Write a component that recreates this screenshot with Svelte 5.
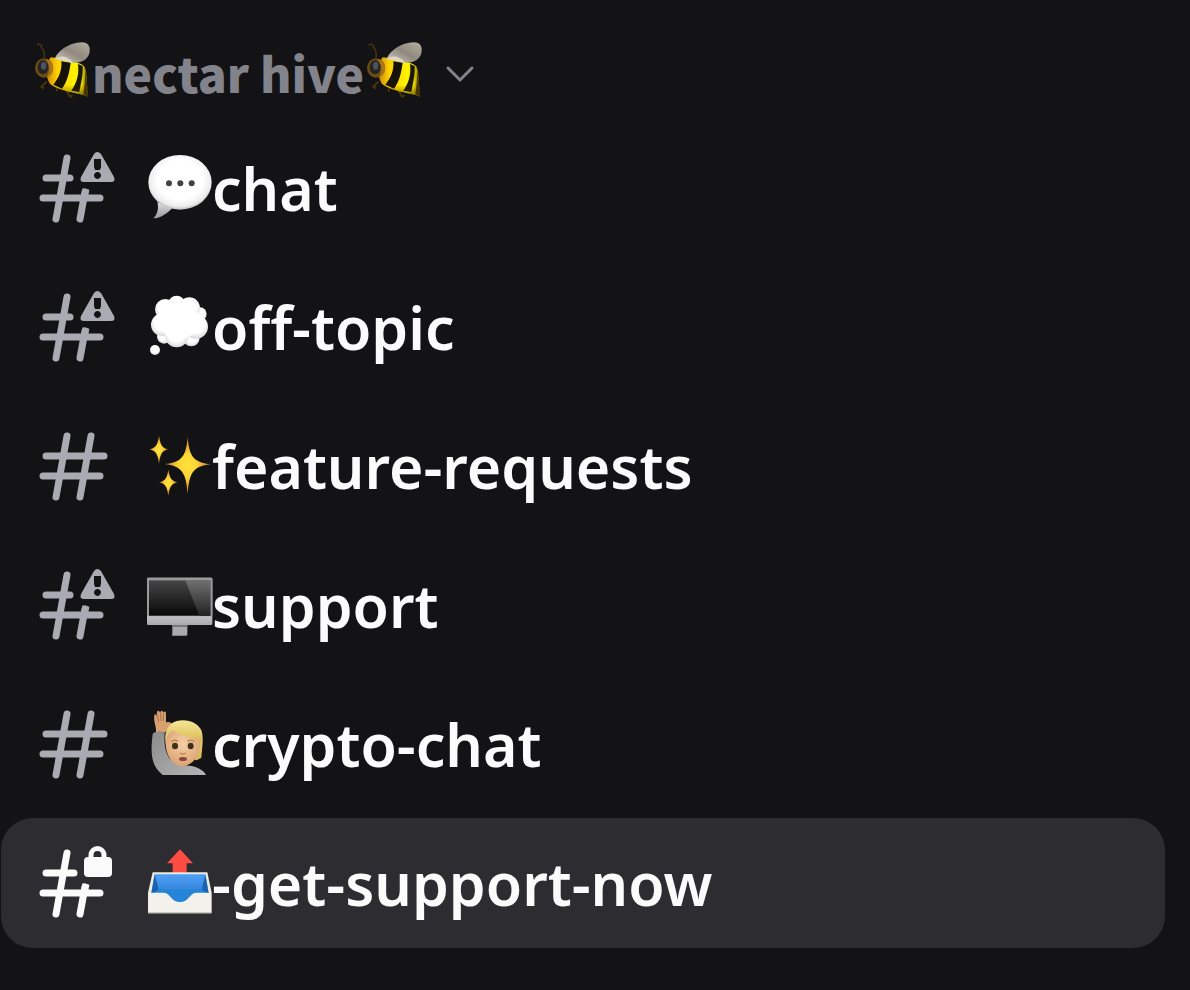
<script>
  let open = true;
  let selected = "-get-support-now";

  const channels = [
    { name: "chat", emoji: "speech", badge: "warning" },
    { name: "off-topic", emoji: "thought", badge: "warning" },
    { name: "feature-requests", emoji: "sparkles", badge: "" },
    { name: "support", emoji: "desktop", badge: "warning" },
    { name: "crypto-chat", emoji: "person", badge: "" },
    { name: "-get-support-now", emoji: "outbox", badge: "lock" },
  ];
</script>

<!-- gradients shared by the emoji -->
<svg class="defs" aria-hidden="true">
  <defs>
    <linearGradient id="wing" x1="0" y1="1" x2="1" y2="0">
      <stop offset="0" stop-color="#d6d0c4" />
      <stop offset="0.5" stop-color="#8f897f" />
      <stop offset="1" stop-color="#b5afa0" />
    </linearGradient>
    <linearGradient id="beeBody" x1="0" y1="0" x2="1" y2="0">
      <stop offset="0" stop-color="#c88a08" />
      <stop offset="0.25" stop-color="#ffd000" />
      <stop offset="0.7" stop-color="#fff400" />
      <stop offset="0.85" stop-color="#e8d800" />
      <stop offset="1" stop-color="#7a6500" />
    </linearGradient>
    <linearGradient id="beeShade" x1="0" y1="0" x2="0" y2="1">
      <stop offset="0.7" stop-color="#3a2600" stop-opacity="0" />
      <stop offset="1" stop-color="#3a2600" stop-opacity="0.6" />
    </linearGradient>
    <radialGradient id="bubble" cx="0.5" cy="0.45" r="0.56">
      <stop offset="0.65" stop-color="#fff" />
      <stop offset="0.88" stop-color="#ececec" />
      <stop offset="1" stop-color="#b5b5b5" />
    </radialGradient>
    <linearGradient id="tail" x1="0" y1="0" x2="0" y2="1">
      <stop offset="0" stop-color="#ddd" />
      <stop offset="1" stop-color="#999" />
    </linearGradient>
    <radialGradient id="puff" cx="0.5" cy="0.4" r="0.6">
      <stop offset="0.6" stop-color="#fff" />
      <stop offset="1" stop-color="#d8d8d8" />
    </radialGradient>
    <radialGradient id="star">
      <stop offset="0" stop-color="#ffe33d" />
      <stop offset="0.4" stop-color="#fcd535" />
      <stop offset="1" stop-color="#c97a2b" />
    </radialGradient>
    <linearGradient id="screen" x1="0" y1="0" x2="0" y2="1">
      <stop offset="0" stop-color="#464646" />
      <stop offset="1" stop-color="#080808" />
    </linearGradient>
    <linearGradient id="glare" x1="0" y1="0" x2="0" y2="1">
      <stop offset="0" stop-color="#707070" />
      <stop offset="1" stop-color="#222" />
    </linearGradient>
    <linearGradient id="chin" x1="0" y1="0" x2="0" y2="1">
      <stop offset="0.7" stop-color="#d2d2d6" />
      <stop offset="1" stop-color="#a9a9ad" />
    </linearGradient>
    <linearGradient id="sleeve" x1="0" y1="0" x2="1" y2="1">
      <stop offset="0" stop-color="#8c8c8c" />
      <stop offset="1" stop-color="#b4b4b4" />
    </linearGradient>
    <radialGradient id="skin" cx="0.5" cy="0.4" r="0.6">
      <stop offset="0" stop-color="#f5d0a6" />
      <stop offset="1" stop-color="#dba373" />
    </radialGradient>
    <linearGradient id="hair" x1="0" y1="0" x2="0" y2="1">
      <stop offset="0" stop-color="#f1e394" />
      <stop offset="1" stop-color="#d9b84b" />
    </linearGradient>
    <linearGradient id="tray" x1="0" y1="0" x2="0" y2="1">
      <stop offset="0" stop-color="#4f9ff5" />
      <stop offset="1" stop-color="#1c6fc4" />
    </linearGradient>
  </defs>
</svg>

{#snippet bee()}
  <svg class="bee" viewBox="36 26 180 180" aria-hidden="true">
    <path d="M72 80C74 62 70 50 62 48M66 48C62 36 56 36 50 42" fill="none" stroke="#4d3813" stroke-width="4" />
    <path d="M80 150L64 166L72 172M112 165L110 180M140 178L150 196L158 192M180 182L204 194" fill="none" stroke="#49340b" stroke-width="6" />
    <path d="M92 78C120 82 176 90 192 104C202 118 200 160 204 196C190 186 126 184 90 158C76 138 76 96 92 78Z" fill="url(#beeBody)" />
    <path d="M124 90L152 94C148 124 142 150 126 172L100 160C118 138 126 116 124 90Z" fill="#171208" />
    <path d="M174 98L188 104C190 130 182 158 178 182L154 178C172 152 178 126 174 98Z" fill="#1c1707" />
    <path d="M196 118C201 144 203 172 204 196L190 188C193 166 196 142 196 118Z" fill="#4a3b08" />
    <path d="M92 78C120 82 176 90 192 104C202 118 200 160 204 196C190 186 126 184 90 158C76 138 76 96 92 78Z" fill="url(#beeShade)" />
    <ellipse cx="72" cy="110" rx="27" ry="29" fill="#6d4c13" />
    <path d="M76 84C94 84 102 100 99 116C97 130 88 137 80 138C92 120 90 98 76 84Z" fill="#a87519" />
    <ellipse cx="69" cy="108" rx="16" ry="21" fill="#242326" />
    <ellipse cx="71" cy="103" rx="8" ry="12" fill="#4d525d" />
    <path d="M104 84C112 58 150 34 184 33C204 32 213 46 208 66C202 86 184 96 158 94C136 90 120 84 104 84Z" fill="url(#wing)" />
    <path d="M104 84C118 72 140 70 160 94C136 92 120 84 104 84Z" fill="#ddd6c9" />
  </svg>
{/snippet}

{#snippet hash(badge)}
  <svg class="hash" viewBox="0 0 80 80" aria-hidden="true">
    <g fill="none" stroke="currentColor" stroke-width="7" stroke-linecap="round">
      <path d="M31 10L20 71M7 50H64" />
      {#if badge}
        <path d="M10 30H{badge === 'lock' ? 38 : 34}M44 71L49 44" />
        <path d="M48 50L50 41" stroke-linecap="butt" />
      {:else}
        <path d="M55 10L44 71M10 30H68" />
      {/if}
    </g>
    {#if badge === "warning"}
      <path
        fill="currentColor"
        fill-rule="evenodd"
        d="M58 6Q61 2 65 6L78 29Q80 34 75 34H48Q43 34 45 29ZM58 11V19L59 22H64L65 19V11ZM61 24A3.5 3.5 0 1 0 62 24Z"
      />
    {:else if badge === "lock"}
      <rect x="48" y="14" width="28" height="20" rx="4" fill="currentColor" />
      <path d="M55 16V12A6.5 6.5 0 0 1 68 12V16" fill="none" stroke="currentColor" stroke-width="5" />
    {/if}
  </svg>
{/snippet}

{#snippet emoji(kind)}
  {#if kind === "speech"}
    <svg class="emoji" viewBox="348 46 198 198" aria-hidden="true">
      <path d="M382 188C388 208 380 228 370 236C392 236 412 220 428 204Z" fill="url(#tail)" />
      <ellipse cx="450" cy="128" rx="95" ry="82" fill="url(#bubble)" />
      <g fill="#424242">
        <circle cx="417" cy="131" r="9" />
        <circle cx="451" cy="131" r="9" />
        <circle cx="485" cy="131" r="9" />
      </g>
    </svg>
  {:else if kind === "thought"}
    <svg class="emoji" viewBox="348 42 198 198" aria-hidden="true">
      <g fill="url(#puff)">
        <circle cx="510" cy="102" r="20" />
        <circle cx="402" cy="170" r="21" />
        <circle cx="484" cy="174" r="25" />
        <circle cx="440" cy="72" r="25" />
        <circle cx="406" cy="88" r="31" />
        <circle cx="478" cy="84" r="32" />
        <circle cx="397" cy="134" r="34" />
        <circle cx="498" cy="140" r="36" />
        <circle cx="440" cy="166" r="36" />
        <circle cx="375" cy="210" r="15" />
      </g>
      <ellipse cx="448" cy="122" rx="62" ry="54" fill="#fff" />
    </svg>
  {:else if kind === "sparkles"}
    <svg class="emoji" viewBox="348 38 198 198" aria-hidden="true">
      <g fill="url(#star)">
        <path d="M473 50C478 106 488 126 542 132C488 138 478 158 473 222C468 158 458 138 404 131C458 126 468 106 473 50Z" />
        <path d="M387 46C391 72 395 82 414 87C395 92 391 102 387 130C383 102 379 92 358 87C379 82 383 72 387 46Z" />
        <path d="M415 148C419 172 423 181 442 186C423 191 419 200 415 226C411 200 407 191 388 186C407 181 411 172 415 148Z" />
      </g>
    </svg>
  {:else if kind === "desktop"}
    <svg class="emoji" viewBox="348 33 198 198" aria-hidden="true">
      <path d="M427 188H472V218Q474 224 468 224H430Q424 224 427 218Z" fill="#aaaaae" />
      <path d="M427 190H472V198H427Z" fill="#77777b" />
      <rect x="351" y="50" width="196" height="142" rx="4" fill="url(#chin)" />
      <rect x="351" y="50" width="196" height="116" rx="4" fill="#9b9b9b" />
      <rect x="357" y="58" width="184" height="106" fill="url(#screen)" />
      <path d="M466 58H541V164H508Z" fill="url(#glare)" />
    </svg>
  {:else if kind === "person"}
    <svg class="emoji" viewBox="348 28 198 198" aria-hidden="true">
      <path d="M368 96C372 88 402 88 404 96C402 124 404 150 420 172L460 192C490 188 522 204 528 220H398C366 194 360 164 368 96Z" fill="url(#sleeve)" />
      <path d="M378 92C380 76 370 60 373 40Q377 34 380 42L381 30Q386 24 390 32Q396 22 400 32Q408 26 408 36L408 62Q420 58 426 66C420 80 410 84 404 94Q390 88 378 92Z" fill="#d6a071" />
      <path d="M382 40L386 60M392 32L393 58M401 34L400 58" stroke="#a47247" stroke-width="3" />
      <path d="M408 130C400 96 412 66 440 58C470 50 504 62 514 86C522 108 516 142 514 168L500 176L420 150Z" fill="url(#hair)" />
      <path d="M408 112C412 96 420 86 430 84C452 100 486 106 510 106C516 134 506 166 488 180C470 198 444 198 428 180C412 164 404 138 408 112Z" fill="url(#skin)" />
      <path d="M410 106C408 78 428 60 458 62C494 62 520 88 516 122C510 112 504 108 494 108C466 106 444 98 430 86C420 90 414 98 410 106Z" fill="url(#hair)" />
      <path d="M424 120Q434 112 444 119M472 119Q484 112 494 120" fill="none" stroke="#b98a45" stroke-width="4" />
      <ellipse cx="435" cy="133" rx="9" ry="10" fill="#40301c" />
      <ellipse cx="482" cy="133" rx="9" ry="10" fill="#40301c" />
      <path d="M450 154Q459 160 468 154" fill="none" stroke="#b97b51" stroke-width="4" />
      <ellipse cx="459" cy="172" rx="12" ry="6" fill="#84493a" />
    </svg>
  {:else}
    <svg class="emoji" viewBox="438 114 198 198" aria-hidden="true">
      <path d="M540 112L579 154H560V182H518V154H501Z" fill="#ff4d44" />
      <path d="M458 181H622L635 242V304H444V242Z" fill="#eeeae1" />
      <path d="M464 187H616L626 244L540 280L454 244Z" fill="url(#tray)" />
      <path d="M464 187L476 232L462 244H454ZM616 187L605 232L618 244H626Z" fill="#1864b3" />
      <path d="M476 232H605L618 244L540 274L462 244Z" fill="#2584d8" />
      <path d="M446 242H492C510 242 514 270 540 270C566 270 570 242 588 242H633V302H446Z" fill="#f3f1ec" />
      <path d="M446 302H633" stroke="#c9c6bf" stroke-width="4" />
    </svg>
  {/if}
{/snippet}

<nav class="sidebar" aria-label="Channels">
  <button class="category" aria-expanded={open} on:click={() => (open = !open)}>
    {@render bee()}<span>nectar hive</span>{@render bee()}
    <svg class="chevron" class:closed={!open} viewBox="0 0 32 32" aria-hidden="true">
      <path d="M4 10L16 22L28 10" fill="none" stroke="currentColor" stroke-width="3" stroke-linecap="round" />
    </svg>
  </button>

  {#if open}
    <ul>
      {#each channels as channel}
        <li>
          <a
            href="#{channel.name}"
            class:selected={selected === channel.name}
            aria-current={selected === channel.name ? "page" : undefined}
            on:click={() => (selected = channel.name)}
          >
            {@render hash(channel.badge)}
            {@render emoji(channel.emoji)}
            <span>{channel.name}</span>
          </a>
        </li>
      {/each}
    </ul>
  {/if}
</nav>

<style>
  :global(body) {
    margin: 0;
    background: #131315;
  }

  .defs {
    position: absolute;
    width: 0;
    height: 0;
  }

  .sidebar {
    box-sizing: border-box;
    min-height: 100vh;
    padding: 24px 25px 24px 1px;
    font-family: "Noto Sans", sans-serif;
  }

  .category {
    display: flex;
    align-items: center;
    width: 100%;
    height: 99px;
    padding: 0 0 0 31px;
    border: 0;
    background: none;
    color: #83838c;
    font-family: "Noto Sans CJK SC", sans-serif;
    font-size: 48px;
    font-weight: 900;
    line-height: 60px;
    white-space: nowrap;
    cursor: pointer;
  }

  .category span {
    padding-bottom: 4px;
  }

  .bee {
    flex: none;
    width: 60px;
    height: 60px;
    margin-bottom: 8px;
  }

  .chevron {
    width: 32px;
    height: 32px;
    margin-left: 20px;
  }

  .closed {
    transform: rotate(-90deg);
  }

  ul {
    display: flex;
    flex-direction: column;
    gap: 9px;
    margin: 0;
    padding: 0;
    list-style: none;
  }

  a {
    display: flex;
    align-items: center;
    height: 130px;
    padding-left: 35px;
    border-radius: 32px;
    color: #aaaab2;
    font-size: 59px;
    font-weight: 600;
    line-height: 80px;
    text-decoration: none;
    white-space: nowrap;
  }

  a span {
    color: #fbfbfb;
  }

  a.selected {
    background: #2d2c31;
    color: #fbfbfb;
  }

  .hash {
    flex: none;
    width: 80px;
    height: 80px;
    margin-right: 30px;
  }

  .emoji {
    flex: none;
    width: 66px;
    height: 66px;
    overflow: visible;
  }
</style>
